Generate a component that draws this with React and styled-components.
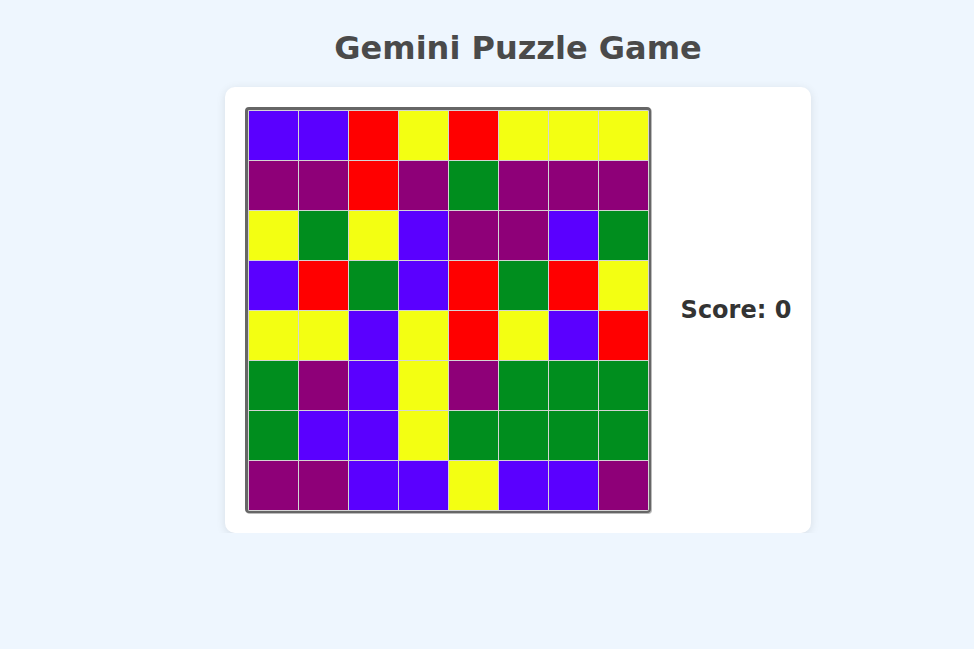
import React from "react";
import styled, { createGlobalStyle } from "styled-components";

const GlobalStyle = createGlobalStyle`
  html, body {
    background: #eef6fe;
  }
  body {
    margin: 8px;
    font-family: "DejaVu Sans", Verdana, sans-serif;
  }
`;

const COLORS = {
  B: "#5a00ff",
  R: "#ff0000",
  Y: "#f3ff12",
  P: "#8e0078",
  G: "#008e1e",
};

const layout = [
  "BBRYRYYY",
  "PPRPGPPP",
  "YGYBPPBG",
  "BRGBRGRY",
  "YYBYRYBR",
  "GPBYPGGG",
  "GBBYGGGG",
  "PPBBYBBP",
];

export default function App() {
  return (
    <Page>
      <GlobalStyle />
      <Title>Gemini Puzzle Game</Title>
      <Card>
        <Board>
          {layout.map((row, r) =>
            row.split("").map((c, i) => <Cell key={r + "-" + i} $color={COLORS[c]} />)
          )}
        </Board>
        <Score>Score: 0</Score>
      </Card>
    </Page>
  );
}

const Page = styled.div`
  display: flex;
  flex-direction: column;
  align-items: center;
  padding-left: 62px;
`;

const Title = styled.h1`
  font-size: 32px;
  font-weight: bold;
  color: #4a4a4a;
  margin: 21.44px 0 19.5px;
`;

const Card = styled.div`
  display: flex;
  align-items: center;
  gap: 30px;
  padding: 20px;
  background: #fff;
  border-radius: 10px;
  box-shadow: 0 2px 10px rgba(0, 0, 0, 0.1);
`;

const Board = styled.div`
  display: grid;
  grid-template-columns: repeat(8, 49px);
  grid-auto-rows: 49px;
  gap: 1px;
  padding: 1px;
  background: #d4d4d4;
  border-style: solid;
  border-color: #666;
  border-width: 3px 2px 2px 3px;
  border-radius: 4px;
  box-shadow: 1px 1px 0 #bbb;
`;

const Cell = styled.div`
  background: ${(p) => p.$color};
`;

const Score = styled.div`
  font-size: 24px;
  font-weight: bold;
  color: #333;
`;
